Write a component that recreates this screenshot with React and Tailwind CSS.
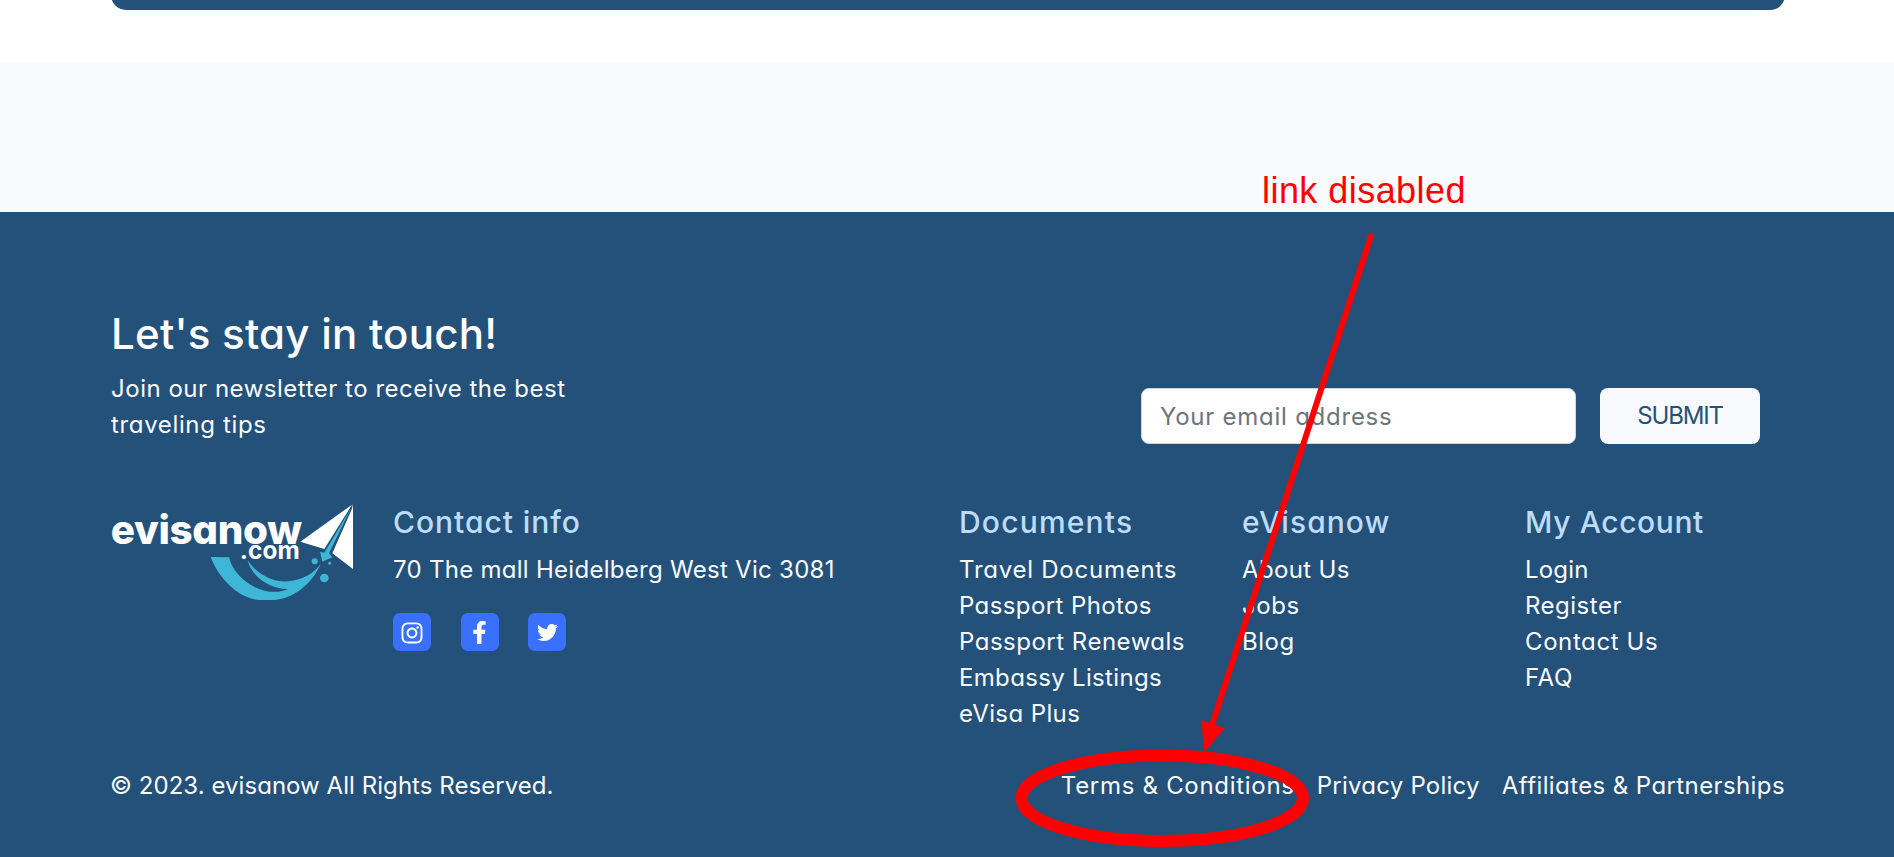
import { FaFacebookF, FaInstagram, FaTwitter } from 'react-icons/fa';

const columns = [
  {
    title: 'Documents',
    titleClass: 'tracking-[1.2px]',
    links: [
      ['Travel Documents', 'tracking-[0.75px]'],
      ['Passport Photos', 'tracking-[0.4px]'],
      ['Passport Renewals', 'tracking-[0.5px]'],
      ['Embassy Listings', 'tracking-[0.33px]'],
      ['eVisa Plus', 'tracking-[0.4px]'],
    ],
  },
  {
    title: 'eVisanow',
    titleClass: 'tracking-[1.05px]',
    links: [
      ['About Us', 'tracking-[0.35px]'],
      ['Jobs', 'tracking-[0.6px]'],
      ['Blog', 'tracking-[0.5px]'],
    ],
  },
  {
    title: 'My Account',
    titleClass: 'tracking-[0.6px]',
    links: [
      ['Login', 'tracking-[0.2px]'],
      ['Register', 'tracking-[0.5px]'],
      ['Contact Us', 'tracking-[0.6px]'],
      ['FAQ', 'tracking-[0.6px]'],
    ],
  },
];

function Logo() {
  return (
    <svg viewBox="63 42 726 288" className="h-24 w-[242px] shrink-0 overflow-visible">
      <text x="62" y="162" textLength="574" fontSize="121" fontWeight="800" fill="#fff">evisanow</text>
      <text x="449" y="208" textLength="180" fontSize="73" fontWeight="700" fill="#fff">.com</text>
      <path
        fill="#3eb6d6"
        d="M362 201C385 262 440 322 505 330H555C622 322 668 275 692 222C660 265 610 277 570 274C530 268 490 240 473 210C480 250 530 297 594 297C570 309 530 310 492 290C450 268 425 235 417 202Z"
      />
      <path fill="#fff" d="M631 155L786 44L703 177Z" />
      <path fill="#fff" d="M789 42V237L727 190L786 56Z" />
      <path fill="#3eb6d6" d="M783 54L717 190L727 202L697 215L690 185L703 188Z" />
      <circle cx="674" cy="214" r="9" fill="#3eb6d6" />
      <circle cx="719" cy="220" r="4.5" fill="#3eb6d6" />
      <circle cx="703" cy="264" r="13" fill="#3eb6d6" />
    </svg>
  );
}

function Social({ children }) {
  return (
    <a className="flex size-[38px] items-center justify-center rounded-[7px] bg-[#3a70ff] pt-px text-white">
      {children}
    </a>
  );
}

function Annotation() {
  return (
    <div className="pointer-events-none absolute inset-0">
      <span className="absolute top-[171px] left-[1262px] font-['Liberation_Sans',sans-serif] text-[36px] leading-[40px] tracking-[0.45px] whitespace-nowrap text-[#ff0000]">
        link disabled
      </span>
      <svg viewBox="0 0 1894 857" className="absolute inset-0 h-[857px] w-[1894px]">
        <path d="M1371 236L1212 725" stroke="#f00" strokeWidth="6" strokeLinecap="round" />
        <path d="M1201 720L1225 728L1204.5 752Z" fill="#f00" />
        <ellipse cx="1162.3" cy="798.2" rx="140.7" ry="42.8" fill="none" stroke="#f00" strokeWidth="12" />
      </svg>
    </div>
  );
}

export default function App() {
  return (
    <div className="relative h-[857px] w-[1894px] overflow-hidden bg-[#f9fafc] font-['Inter',sans-serif] text-[24px] leading-[36px] whitespace-nowrap text-[#fafbfd] [font-feature-settings:'cv11']">
      <div className="h-[62px] bg-white pr-[109px] pl-[111px]">
        <div className="h-[10px] overflow-hidden">
          <div className="-mt-10 h-[50px] rounded-b-[15px] bg-[#245179]" />
        </div>
      </div>

      <footer className="mt-[150px] h-[645px] bg-[#245179] pt-[97px] pr-[109px] pl-[111px]">
        <section className="flex justify-between">
          <div>
            <h2 className="text-[42px] leading-[50px] font-medium tracking-[0.25px] text-white">Let's stay in touch!</h2>
            <p className="mt-3 tracking-[0.52px]">Join our newsletter to receive the best</p>
            <p className="tracking-[0.65px]">traveling tips</p>
          </div>
          <form className="mt-[79px] mr-[25px] flex h-14 gap-6">
            <input
              className="h-14 w-[435px] rounded-lg border border-[#ced4da] bg-white px-[18px] tracking-[0.75px] text-[#6c757d] placeholder:text-[#6c757d]"
              placeholder="Your email address"
            />
            <button
              type="button"
              className="h-14 w-[160px] rounded-lg bg-[#f8f9fc] tracking-[-1.2px] text-[#245179]"
            >
              SUBMIT
            </button>
          </form>
        </section>

        <section className="mt-[60px] flex h-[228px]">
          <Logo />
          <div className="ml-10 w-[566px] shrink-0">
            <h3 className="text-[30px] font-medium tracking-[0.95px] text-[#bcdcfa]">Contact info</h3>
            <p className="mt-3 tracking-[0.28px]">70 The mall Heidelberg West Vic 3081</p>
            <div className="mt-[25px] flex gap-[29.5px]">
              <Social><FaInstagram size={24} /></Social>
              <Social><FaFacebookF size={23} /></Social>
              <Social><FaTwitter size={21} /></Social>
            </div>
          </div>
          {columns.map((column) => (
            <nav key={column.title} className="w-[283px] shrink-0">
              <h3 className={`text-[30px] font-medium text-[#bcdcfa] ${column.titleClass}`}>{column.title}</h3>
              <ul className="mt-3">
                {column.links.map(([label, tracking]) => (
                  <li key={label} className={tracking}>{label}</li>
                ))}
              </ul>
            </nav>
          ))}
        </section>

        <section className="mt-9 flex justify-between">
          <p className="-ml-px tracking-[0.05px]">© 2023. evisanow All Rights Reserved.</p>
          <div className="flex gap-[22px]">
            <a className="tracking-[0.7px]">Terms &amp; Conditions</a>
            <a className="tracking-[0.25px]">Privacy Policy</a>
            <a className="tracking-[0.4px]">Affiliates &amp; Partnerships</a>
          </div>
        </section>
      </footer>

      <Annotation />
    </div>
  );
}
